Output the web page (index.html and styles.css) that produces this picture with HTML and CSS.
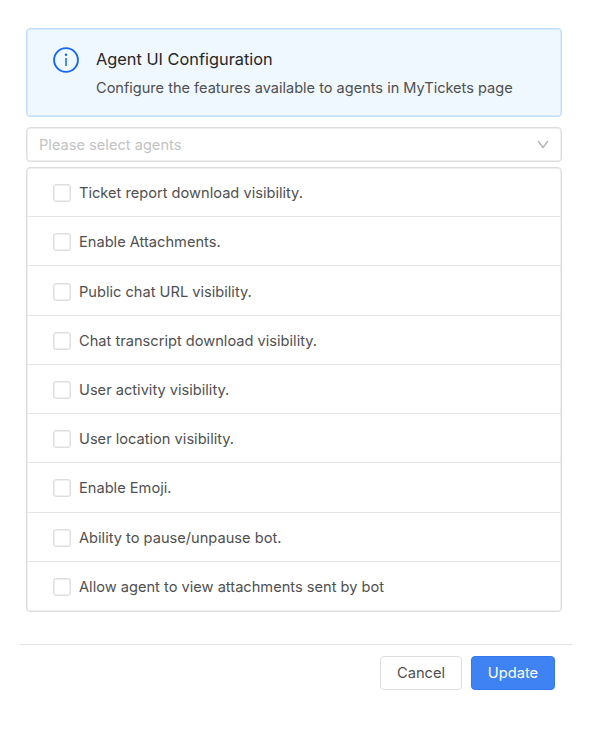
FILE: index.html
```html
<!DOCTYPE html>
<html lang="en">
<head>
<meta charset="utf-8">
<title>Agent UI Configuration</title>
<link rel="stylesheet" href="styles.css">
</head>
<body>
<main class="panel">
  <section class="alert">
    <svg class="alert-icon" viewBox="0 0 26 26"><circle cx="13" cy="13" r="11.9" fill="none" stroke="currentColor" stroke-width="1.9"/><circle cx="13" cy="7.8" r="1.2" fill="currentColor"/><path d="M13 11v8" stroke="currentColor" stroke-width="1.5"/></svg>
    <div>
      <h1 class="alert-title">Agent UI Configuration</h1>
      <p class="alert-text">Configure the features available to agents in MyTickets page</p>
    </div>
  </section>
  <div class="select"><span>Please select agents</span>
    <svg class="chevron" viewBox="0 0 12 10"><path d="M1 1l5 6.500 5-6.500" fill="none" stroke="currentColor" stroke-width="1.4"/></svg>
  </div>
  <ul class="list">
    <li class="item"><span class="box"></span><span>Ticket report download visibility.</span></li>
    <li class="item"><span class="box"></span><span>Enable Attachments.</span></li>
    <li class="item"><span class="box"></span><span>Public chat URL visibility.</span></li>
    <li class="item"><span class="box"></span><span>Chat transcript download visibility.</span></li>
    <li class="item"><span class="box"></span><span>User activity visibility.</span></li>
    <li class="item"><span class="box"></span><span>User location visibility.</span></li>
    <li class="item"><span class="box"></span><span>Enable Emoji.</span></li>
    <li class="item"><span class="box"></span><span>Ability to pause/unpause bot.</span></li>
    <li class="item"><span class="box"></span><span>Allow agent to view attachments sent by bot</span></li>
  </ul>
</main>
<footer class="footer">
  <button class="btn">Cancel</button>
  <button class="btn primary">Update</button>
</footer>
</body>
</html>
```
FILE: styles.css
```css
* { box-sizing: border-box; }
body { margin: 0; background: #fff; color: #505050; font: 14.63px/24px Inter, sans-serif; }
.panel { padding: 28px 30px 0 26px; }
.alert { display: flex; gap: 17px; height: 89px; padding: 18px 26px 0; background: #eff7ff; border: 1px solid #bfdeff; border-radius: 4px; box-shadow: inset 0 0 0 0.5px #bfdeff; }
.alert-icon { width: 26px; height: 26px; color: #1668f5; flex: none; }
.alert-title { margin: 0; font-size: 16.35px; font-weight: 400; line-height: 24px; color: #262626; }
.alert-text { margin: 5px 0 0; font-size: 14.55px; white-space: nowrap; }
.select { display: flex; align-items: center; justify-content: space-between; height: 35px; margin-top: 10px; padding: 0 12px; border: 1px solid #dedede; border-radius: 4px; box-shadow: inset 0 0 0 0.5px #dedede; color: #c3c3c3; }
.chevron { width: 12px; height: 10px; color: #b5b5b5; }
.list { list-style: none; margin: 5px 0 0; padding: 0; border: 1px solid #dedede; border-radius: 4px; box-shadow: inset 0 0 0 0.5px #dedede; height: 445px; display: grid; grid-template-rows: repeat(9, 1fr); }
.item { display: flex; align-items: center; gap: 8px; padding: 2px 0 0 26px; border-bottom: 1px solid #e4e4e4; }
.item:last-child { border-bottom: 0; }
.box { width: 18px; height: 18px; border: 1px solid #dedede; border-radius: 3px; box-shadow: inset 0 0 0 0.5px #dedede; }
.footer { display: flex; justify-content: flex-end; gap: 9px; margin: 32px 20px 0; padding: 11px 17px 0 0; border-top: 1px solid #e4e4e4; }
.btn { width: 82px; height: 34px; padding: 0; border: 1px solid #dedede; border-radius: 4px; background: #fff; color: #505050; font: 14.7px Inter, sans-serif; }
.primary { width: 84px; background: #3e82f4; border-color: #3478f0; color: #fff; }
```
